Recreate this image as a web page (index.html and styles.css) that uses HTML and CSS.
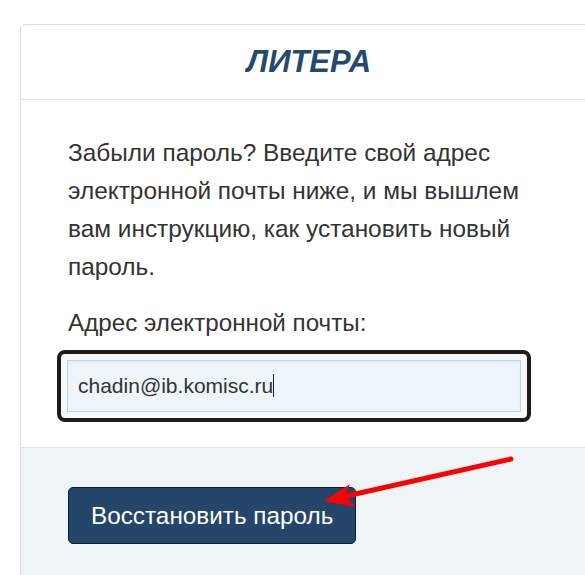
FILE: index.html
```html
<!DOCTYPE html>
<html lang="ru">
<head>
    <meta charset="UTF-8">
    <meta name="viewport" content="width=device-width, initial-scale=1.0">
    <title>ЛИТЕРА — Восстановление пароля</title>
    <link rel="stylesheet" href="styles.css">
</head>
<body>
<div class="card">
    <header class="card-header">
        <h1>ЛИТЕРА</h1>
    </header>
    <form class="card-body" onsubmit="return false;">
        <p class="intro">Забыли пароль? Введите свой адрес электронной почты ниже, и мы вышлем вам инструкцию, как установить новый пароль.</p>
        <label class="field-label" for="email">Адрес электронной почты:</label>
        <div class="field-focus">
            <input type="email" id="email" value="chadin@ib.komisc.ru">
            <span class="caret"></span>
        </div>
    </form>
    <div class="card-footer">
        <button type="submit">Восстановить пароль</button>
    </div>
</div>

<!-- annotation arrow over the button -->
<svg class="arrow" width="585" height="575" viewBox="0 0 585 575">
    <line x1="511" y1="459" x2="342" y2="497" stroke="#ff0000" stroke-width="5" stroke-linecap="round"/>
    <polygon points="324,501 350,484 345,496 356,507" fill="#ff0000"/>
</svg>
</body>
</html>
```

FILE: styles.css
```css
html, body {
    overflow: hidden;
}

body {
    font-family: 'Liberation Sans', Arial, sans-serif;
    background-color: #FFFFFF;
    color: #333333;
    margin: 0;
    padding: 0;
}

.card {
    box-sizing: border-box;
    width: 578px;
    margin: 24px 0 0 20px;
    border: 1px solid #d9e0e8;
    border-radius: 5px 5px 0 0;
}

.card-header {
    height: 74px;
    border-bottom: 1px solid #dde2ea;
    text-align: center;
}

.card-header h1 {
    margin: 0;
    font-size: 31px;
    line-height: 74px;
    font-style: italic;
    font-weight: bold;
    color: #234a6d;
}

.card-body {
    padding: 34px 47px 25px;
    margin: 0;
}

.intro {
    margin: 0 0 18px;
    font-size: 24.4px;
    line-height: 38px;
}

.field-label {
    display: block;
    font-size: 24.2px;
    line-height: 38px;
    margin-bottom: 8px;
}

.field-focus {
    position: relative;
    width: 454px;
    margin-left: -11px;
    padding: 6px;
    border: 4px solid #1c1c1c;
    border-radius: 8px;
    background-color: #f6f9fc;
}

.field-focus input {
    display: block;
    box-sizing: border-box;
    width: 454px;
    height: 52px;
    margin: 0;
    padding: 0 10px;
    border: 1px solid #bad3ea;
    background-color: #eef5fb;
    box-shadow: inset 0 2px 3px rgba(0, 0, 0, 0.04);
    font-family: 'Liberation Sans', Arial, sans-serif;
    font-size: 21px;
    color: #333333;
    outline: none;
}

.caret {
    position: absolute;
    left: 212px;
    top: 20px;
    height: 23px;
    border-left: 1px solid #222222;
}

.card-footer {
    background-color: #eff4f7;
    border-top: 1px solid #dde2e8;
    padding: 39px 47px 40px;
}

.card-footer button {
    height: 57px;
    padding: 0 22px;
    border: 1px solid #0e2132;
    border-radius: 5px;
    background-color: #23466a;
    color: #FFFFFF;
    font-family: 'Liberation Sans', Arial, sans-serif;
    font-size: 24.3px;
    cursor: pointer;
}

.arrow {
    position: absolute;
    left: 0;
    top: 0;
    pointer-events: none;
}
```
